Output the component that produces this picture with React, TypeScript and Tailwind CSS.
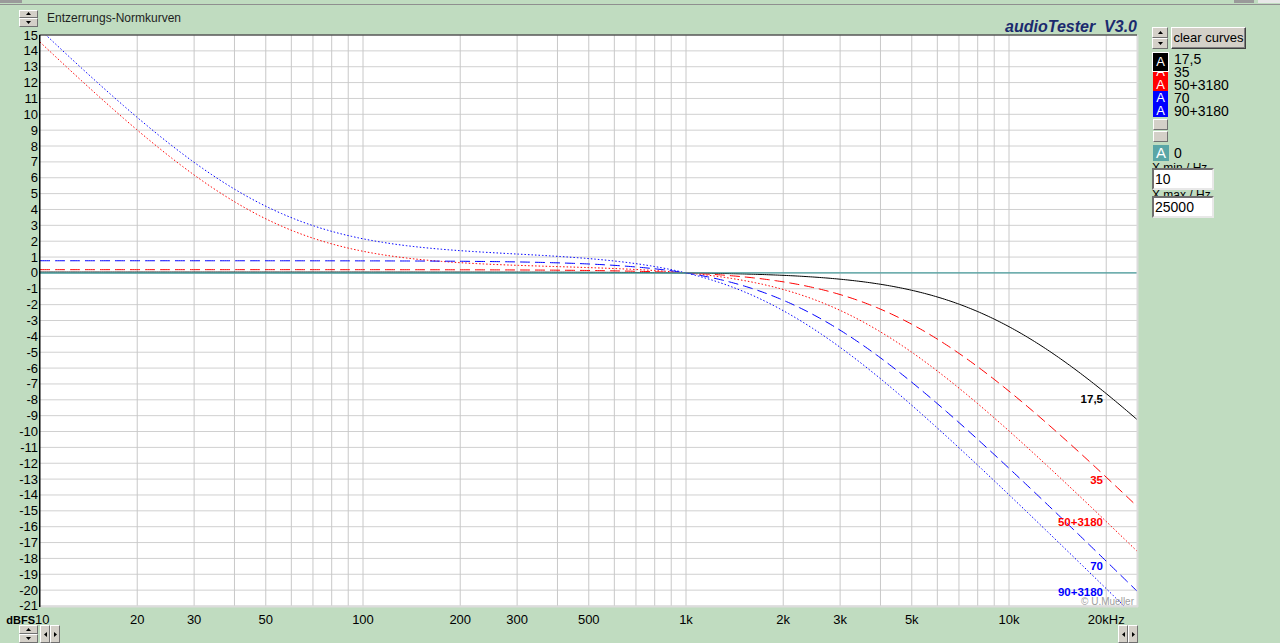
import React from "react";

const SVG_FONT = "Liberation Sans, Arial, sans-serif";

// plot geometry (svg starts at page y=35)
const X0 = 40;
const X1 = 1137;
const DEC = 323;
const PX_DB = 15.861;
const YB = 571;

const fx = (f: number) => X0 + DEC * Math.log10(f / 10);
const dy = (db: number) => (15 - db) * PX_DB;

type Curve = {
  name: string;
  hi: number;
  lo?: number;
  color: string;
  dash?: string;
  ly: number;
};

const CURVES: Curve[] = [
  { name: "17,5", hi: 17.5e-6, color: "#000000", ly: 368 },
  { name: "35", hi: 35e-6, color: "#ff0000", dash: "10 5", ly: 449 },
  { name: "50+3180", hi: 50e-6, lo: 3180e-6, color: "#ff0000", dash: "1.5 2", ly: 491 },
  { name: "70", hi: 70e-6, color: "#0000ff", dash: "10 5", ly: 535 },
  { name: "90+3180", hi: 90e-6, lo: 3180e-6, color: "#0000ff", dash: "1.5 2", ly: 561 },
];

function H(f: number, hi: number, lo?: number) {
  const w = 2 * Math.PI * f;
  let v = -10 * Math.log10(1 + (w * hi) ** 2);
  if (lo) v += 10 * Math.log10(1 + 1 / (w * lo) ** 2);
  return v;
}

function points(c: Curve) {
  const n = 500;
  const ref = H(1000, c.hi, c.lo);
  const out: string[] = [];
  for (let i = 0; i <= n; i++) {
    const f = 10 * Math.pow(2500, i / n);
    const v = H(f, c.hi, c.lo) - ref;
    out.push(`${fx(f).toFixed(2)},${dy(v).toFixed(2)}`);
  }
  return out.join(" ");
}

const GRID: number[] = [];
for (const d of [10, 100, 1000, 10000]) {
  for (let m = 1; m <= 9; m++) {
    const f = m * d;
    if (f > 10 && f <= 25000) GRID.push(f);
  }
}

const XLABELS: [number, string][] = [
  [20, "20"],
  [30, "30"],
  [50, "50"],
  [100, "100"],
  [200, "200"],
  [300, "300"],
  [500, "500"],
  [1000, "1k"],
  [2000, "2k"],
  [3000, "3k"],
  [5000, "5k"],
  [10000, "10k"],
  [20000, "20kHz"],
];

const DBS = Array.from({ length: 37 }, (_, i) => 15 - i);

const btn =
  "bg-[#d4d0c8] border border-t-white border-l-white border-r-[#707070] border-b-[#707070] flex items-center justify-center";

function Up() {
  return (
    <svg width="5" height="3" viewBox="0 0 5 3">
      <polygon points="0,3 2.5,0 5,3" fill="#000" />
    </svg>
  );
}

function Down() {
  return (
    <svg width="5" height="3" viewBox="0 0 5 3">
      <polygon points="0,0 5,0 2.5,3" fill="#000" />
    </svg>
  );
}

function Left() {
  return (
    <svg width="3" height="5" viewBox="0 0 3 5">
      <polygon points="3,0 3,5 0,2.5" fill="#000" />
    </svg>
  );
}

function Right() {
  return (
    <svg width="3" height="5" viewBox="0 0 3 5">
      <polygon points="0,0 0,5 3,2.5" fill="#000" />
    </svg>
  );
}

function Spin({ className }: { className: string }) {
  return (
    <div className={`flex flex-col ${className}`}>
      <div className={`${btn} flex-1`}>
        <Up />
      </div>
      <div className={`${btn} flex-1`}>
        <Down />
      </div>
    </div>
  );
}

function Arrows() {
  return (
    <div className="flex h-[18px]">
      <div className={`${btn} w-[10px]`}>
        <Left />
      </div>
      <div className={`${btn} w-[10px]`}>
        <Right />
      </div>
    </div>
  );
}

function Chart() {
  return (
    <svg width="1140" height="590" className="overflow-visible block" fontFamily={SVG_FONT}>
      <defs>
        <clipPath id="plot">
          <rect x={X0} y={0} width={X1 - X0} height={YB} />
        </clipPath>
      </defs>
      <rect x={X0} y={0} width={X1 - X0} height={YB} fill="#ffffff" />
      {DBS.map((v) => (
        <line key={v} x1={X0} x2={X1} y1={dy(v)} y2={dy(v)} stroke="#d0d0d0" strokeWidth={1} />
      ))}
      {GRID.map((f) => (
        <line key={f} x1={fx(f)} x2={fx(f)} y1={0} y2={YB} stroke="#c8c8c8" strokeWidth={1} />
      ))}
      <g clipPath="url(#plot)">
        {CURVES.map((c) => (
          <polyline
            key={c.name}
            points={points(c)}
            fill="none"
            stroke={c.color}
            strokeWidth={1}
            strokeDasharray={c.dash}
          />
        ))}
        <line x1={X0} x2={686} y1={dy(0)} y2={dy(0)} stroke="#4a9e9e" strokeWidth={1.5} />
        <line x1={686} x2={X1} y1={dy(0)} y2={dy(0)} stroke="#4a9e9e" strokeWidth={1.2} />
      </g>
      {CURVES.map((c) => (
        <text key={c.name} x={1103} y={c.ly} fontSize={11.5} fontWeight="bold" textAnchor="end" fill={c.color}>
          {c.name}
        </text>
      ))}
      <text x={1134} y={570} fontSize={10} textAnchor="end" fill="#a0a0a0">
        © U.Mueller
      </text>
      {/* frame */}
      <line x1={X1 + 0.5} x2={X1 + 0.5} y1={0} y2={YB + 1} stroke="#dcdcdc" strokeWidth={2} />
      <line x1={X0} x2={X1 + 1} y1={YB + 0.5} y2={YB + 0.5} stroke="#dcdcdc" strokeWidth={2} />
      <line x1={X0 - 0.5} x2={X1} y1={0} y2={0} stroke="#1a1a1a" strokeWidth={1} />
      <line x1={X0 - 0.25} x2={X0 - 0.25} y1={0} y2={YB + 1} stroke="#000" strokeWidth={1.5} />
      {DBS.map((v) => (
        <text key={v} x={38} y={dy(v) + 4.5} fontSize={13} textAnchor="end" fill="#000">
          {v}
        </text>
      ))}
      <text x={35} y={589} fontSize={11} fontWeight="bold" textAnchor="end" fill="#000">
        dBFS
      </text>
      <text x={35} y={589} fontSize={13} fill="#000">
        10
      </text>
      {XLABELS.map(([f, s]) => (
        <text key={f} x={fx(f)} y={589} fontSize={13} textAnchor="middle" fill="#000">
          {s}
        </text>
      ))}
    </svg>
  );
}

const LEGEND = [
  { name: "35", bg: "bg-[#ff0000]" },
  { name: "50+3180", bg: "bg-[#ff0000]" },
  { name: "70", bg: "bg-[#0000ff]" },
  { name: "90+3180", bg: "bg-[#0000ff]" },
];

function Legend() {
  return (
    <div className="flex flex-col mt-[3px]">
      <div className="flex items-start h-[13px]">
        <div className="relative z-10 w-[17px] h-[20px] border border-white bg-black text-white text-[13px] leading-[18px] text-center">
          A
        </div>
        <span className="ml-[5px] text-[14px] leading-[15px] text-black">17,5</span>
      </div>
      {LEGEND.map((l) => (
        <div key={l.name} className="flex items-start h-[13px]">
          <div className={`ml-[1px] w-[15px] h-[13px] ${l.bg} text-white text-[13px] leading-[14px] text-center`}>
            A
          </div>
          <span className="ml-[6px] text-[14px] leading-[14px] text-black">{l.name}</span>
        </div>
      ))}
      <div className={`${btn} ml-[1px] w-[15px] h-[11px] mt-[2px]`} />
      <div className={`${btn} ml-[1px] w-[15px] h-[11px] mt-[1px]`} />
      <div className="flex items-center h-[16px] mt-[3px]">
        <div className="ml-[1px] w-[16px] h-[16px] bg-[#5aa6a6] text-white text-[15px] leading-[16px] text-center">
          A
        </div>
        <span className="ml-[5px] text-[14px] text-black">0</span>
      </div>
      <div className="h-[7px] overflow-hidden text-[12px] leading-[14px] text-black whitespace-nowrap">X min / Hz</div>
      <div className="w-[62px] h-[22px] bg-white border-2 border-t-[#707070] border-l-[#707070] border-r-[#e8e8e8] border-b-[#e8e8e8] text-[14px] leading-[18px] pl-[1px] text-black">
        10
      </div>
      <div className="h-[6px] overflow-hidden text-[12px] leading-[10px] text-black whitespace-nowrap">X max / Hz</div>
      <div className="w-[62px] h-[22px] bg-white border-2 border-t-[#707070] border-l-[#707070] border-r-[#e8e8e8] border-b-[#e8e8e8] text-[14px] leading-[18px] pl-[1px] text-black">
        25000
      </div>
    </div>
  );
}

export default function App() {
  return (
    <div className="w-[1280px] h-[643px] overflow-hidden flex flex-col bg-[#c0dcc0] font-['Liberation_Sans',Arial,sans-serif]">
      <div className="h-[5px] flex justify-between border-b border-[#8f8f8f]">
        <div className="w-[22px] h-[3px] bg-[#9a9a9a]" />
        <div className="flex gap-[4px]">
          <div className="w-[20px] h-[3px] bg-[#9a9a9a]" />
          <div className="w-[22px] h-[3px] bg-[#e8e8e8]" />
        </div>
      </div>
      <div className="flex flex-1">
        <div className="w-[1140px] flex flex-col">
          <div className="h-[30px] flex justify-between">
            <div className="flex items-center gap-[9px] pl-[19px] mt-[4px] self-start">
              <Spin className="w-[19px] h-[17px]" />
              <span className="text-[12px] text-[#1e1e1e]">Entzerrungs-Normkurven</span>
            </div>
            <div className="self-end text-[16px] leading-[16px] font-bold italic text-[#1b2a6e] pr-[3px] whitespace-pre">
              audioTester  V3.0
            </div>
          </div>
          <Chart />
          <div className="h-[17px] flex justify-between items-start">
            <div className="flex pl-[19px] gap-[2px]">
              <Spin className="w-[19px] h-[18px]" />
              <Arrows />
            </div>
            <div className="pr-[2px]">
              <Arrows />
            </div>
          </div>
        </div>
        <div className="w-[140px] pl-[12px] pt-[22px] flex flex-col">
          <div className="flex gap-[3px] h-[22px]">
            <Spin className="w-[16px] h-[22px]" />
            <div className="w-[75px] h-[22px] bg-[#d4d0c8] border border-t-white border-l-white border-r-[#404040] border-b-[#404040] shadow-[inset_-1px_-1px_0_#808080] text-[13px] leading-[20px] text-center text-black">
              clear curves
            </div>
          </div>
          <Legend />
        </div>
      </div>
    </div>
  );
}
